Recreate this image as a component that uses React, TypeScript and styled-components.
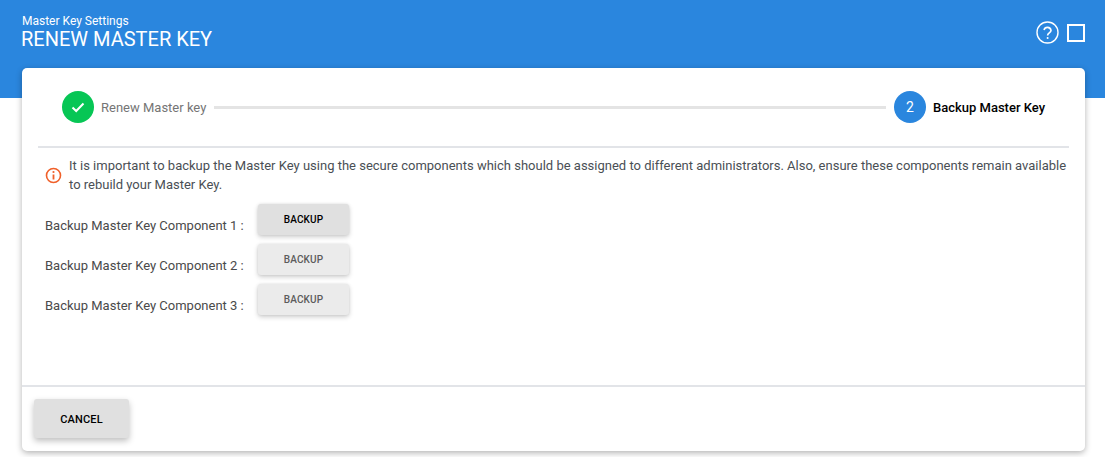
import React from "react";
import styled, { createGlobalStyle } from "styled-components";

const Global = createGlobalStyle`
  html, body { margin: 0; padding: 0; background: #fff; overflow: hidden; }
  body { font-family: Roboto, "Liberation Sans", sans-serif; }
`;

const Page = styled.div`
  width: 1105px;
  height: 457px;
  overflow: hidden;
  background: #fff;
`;

const Header = styled.header`
  height: 98px;
  box-sizing: border-box;
  background: #2a86de;
  color: #fff;
  display: flex;
  justify-content: space-between;
  align-items: flex-start;
  padding: 15px 20px 0 22px;
`;

const Titles = styled.div`
  display: flex;
  flex-direction: column;
`;

const SubTitle = styled.div`
  font-size: 12px;
  line-height: 12px;
`;

const Title = styled.h1`
  margin: 0;
  font-size: 20px;
  line-height: 24px;
  font-weight: 400;
  margin-left: -1px;
`;

const HeaderIcons = styled.div`
  display: flex;
  align-items: center;
  gap: 8px;
  margin-top: 6px;
`;

const Card = styled.main`
  margin: -30px 20px 0 22px;
  height: 383px;
  background: #fff;
  border-radius: 5px;
  box-shadow: 0 2px 6px rgba(0, 0, 0, 0.3);
  display: flex;
  flex-direction: column;
`;

const Body = styled.div`
  flex: 1;
  padding: 0 16px;
  min-height: 0;
`;

const Stepper = styled.div`
  height: 80px;
  box-sizing: border-box;
  padding: 0 24px;
  display: flex;
  align-items: center;
  border-bottom: 2px solid #e2e4e8;
`;

const StepCircle = styled.div<{ $bg: string }>`
  width: 32px;
  height: 32px;
  border-radius: 50%;
  background: ${(p) => p.$bg};
  color: #fff;
  font-size: 14px;
  display: flex;
  align-items: center;
  justify-content: center;
  flex: none;
`;

const StepLabel = styled.span<{ $active?: boolean }>`
  margin-left: 7px;
  font-size: 13px;
  font-weight: ${(p) => (p.$active ? 500 : 400)};
  color: ${(p) => (p.$active ? "#000" : "#757575")};
  white-space: nowrap;
`;

const Connector = styled.div`
  flex: 1;
  height: 3px;
  margin: 0 8px;
  background: #e4e4e4;
`;

const Notice = styled.div`
  display: flex;
  align-items: center;
  gap: 7px;
  padding: 8px 0 0 7px;
  font-size: 13px;
  line-height: 19px;
  color: #4a4f55;
`;

const NoticeText = styled.p`
  margin: 0;
`;

const Rows = styled.div`
  display: flex;
  flex-direction: column;
  gap: 9px;
  margin-top: 10px;
  padding-left: 7px;
`;

const Row = styled.div`
  display: flex;
  align-items: center;
  height: 31px;
`;

const RowLabel = styled.span`
  width: 213px;
  font-size: 13px;
  color: #4a4a4a;
  margin-top: 11px;
  white-space: nowrap;
`;

const ActionButton = styled.button<{ $disabled?: boolean }>`
  border: 0;
  padding: 0;
  width: 91px;
  height: 31px;
  border-radius: 3px;
  background: ${(p) => (p.$disabled ? "#ebebeb" : "#e0e0e0")};
  color: ${(p) => (p.$disabled ? "#5c5c5c" : "#000")};
  box-shadow: 0 2px 5px rgba(0, 0, 0, 0.2), 0 0 3px rgba(0, 0, 0, 0.08);
  font-family: inherit;
  font-size: 10px;
  font-weight: 500;
  letter-spacing: 0.15px;
  line-height: 28px;
  display: block;
`;

const Footer = styled.footer`
  height: 66px;
  box-sizing: border-box;
  border-top: 2px solid #e2e4e8;
  padding: 12px 12px;
`;

const CancelButton = styled.button`
  border: 0;
  padding: 1px 0 0;
  width: 95px;
  height: 39px;
  border-radius: 3px;
  background: #e0e0e0;
  color: #000;
  box-shadow: 0 3px 6px rgba(0, 0, 0, 0.25);
  font-family: inherit;
  font-size: 11px;
  font-weight: 500;
  letter-spacing: 0.15px;
`;

export default function App() {
  return (
    <Page>
      <Global />
      <Header>
        <Titles>
          <SubTitle>Master Key Settings</SubTitle>
          <Title>RENEW MASTER KEY</Title>
        </Titles>
        <HeaderIcons>
          <svg width="23" height="23" viewBox="0 0 23 23" fill="none" stroke="#fff">
            <circle cx="11.5" cy="11.5" r="10.5" strokeWidth="1.4" />
            <path d="M8 9a3.6 3.6 0 0 1 7 .4c0 2.4-3.4 2.6-3.4 5" strokeWidth="1.6" />
            <circle cx="11.6" cy="17" r="1" fill="#fff" stroke="none" />
          </svg>
          <svg width="18" height="18" viewBox="0 0 18 18" fill="none" stroke="#fff">
            <rect x="1" y="1" width="16" height="16" strokeWidth="2" />
          </svg>
        </HeaderIcons>
      </Header>
      <Card>
        <Body>
          <Stepper>
            <StepCircle $bg="#07c655">
              <svg width="16" height="16" viewBox="0 0 16 16" fill="none" stroke="#fff" strokeWidth="2">
                <path d="M2.5 8.5l3.7 3.5 7.3-7.5" />
              </svg>
            </StepCircle>
            <StepLabel>Renew Master key</StepLabel>
            <Connector />
            <StepCircle $bg="#2a86de">2</StepCircle>
            <StepLabel $active>Backup Master Key</StepLabel>
          </Stepper>
          <Notice>
            <svg width="17" height="17" viewBox="0 0 17 17" fill="none" stroke="#f0602a" style={{ flex: "none" }}>
              <circle cx="8.5" cy="8.5" r="7" strokeWidth="1.6" />
              <path d="M8.5 7.5v5" strokeWidth="1.8" />
              <circle cx="8.5" cy="5" r="1.1" fill="#f0602a" stroke="none" />
            </svg>
            <NoticeText>
              It is important to backup the Master Key using the secure components which should be assigned to different
              administrators. Also, ensure these components remain available to rebuild your Master Key.
            </NoticeText>
          </Notice>
          <Rows>
            <Row>
              <RowLabel>Backup Master Key Component 1 :</RowLabel>
              <ActionButton>BACKUP</ActionButton>
            </Row>
            <Row>
              <RowLabel>Backup Master Key Component 2 :</RowLabel>
              <ActionButton $disabled>BACKUP</ActionButton>
            </Row>
            <Row>
              <RowLabel>Backup Master Key Component 3 :</RowLabel>
              <ActionButton $disabled>BACKUP</ActionButton>
            </Row>
          </Rows>
        </Body>
        <Footer>
          <CancelButton>CANCEL</CancelButton>
        </Footer>
      </Card>
    </Page>
  );
}
